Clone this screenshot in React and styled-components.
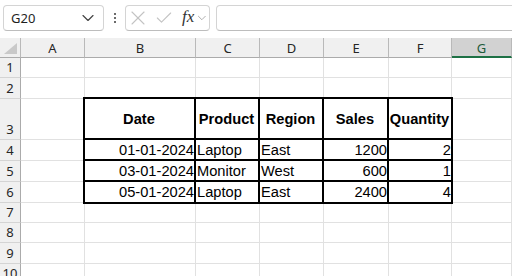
import React from "react";
import styled, { createGlobalStyle } from "styled-components";
import { ChevronDown, X, Check } from "lucide-react";

const GlobalStyle = createGlobalStyle`
  html, body {
    margin: 0;
    padding: 0;
    background: #ffffff;
    overflow: hidden;
  }
  body {
    font-family: 'Noto Sans', 'Liberation Sans', sans-serif;
  }
`;

const COLUMNS = ["A", "B", "C", "D", "E", "F", "G"];
const ROW_HEIGHTS = [20, 21, 41, 21, 21, 21, 20, 20, 21, 20];

const TABLE = [
  [
    { text: "Date", align: "center" },
    { text: "Product", align: "center" },
    { text: "Region", align: "center" },
    { text: "Sales", align: "center" },
    { text: "Quantity", align: "center" },
  ],
  [
    { text: "01-01-2024", align: "right" },
    { text: "Laptop" },
    { text: "East" },
    { text: "1200", align: "right" },
    { text: "2", align: "right" },
  ],
  [
    { text: "03-01-2024", align: "right" },
    { text: "Monitor" },
    { text: "West" },
    { text: "600", align: "right" },
    { text: "1", align: "right" },
  ],
  [
    { text: "05-01-2024", align: "right" },
    { text: "Laptop" },
    { text: "East" },
    { text: "2400", align: "right" },
    { text: "4", align: "right" },
  ],
];

export default function App() {
  return (
    <Page>
      <GlobalStyle />
      <Toolbar>
        <NameBox>
          <NameText>G20</NameText>
          <ChevronDown size={20} strokeWidth={1.4} color="#444" />
        </NameBox>
        <MoreDots>
          <span />
          <span />
          <span />
        </MoreDots>
        <FormulaGroup>
          <CancelIcon size={24} strokeWidth={1.1} color="#c3c3c3" />
          <CheckIcon size={20} strokeWidth={1.3} color="#c3c3c3" />
          <FxLabel>fx</FxLabel>
          <ChevronDown size={16} strokeWidth={1.4} color="#9a9a9a" />
        </FormulaGroup>
        <FormulaInput />
      </Toolbar>

      <Sheet>
        <Corner $r={1} $c={1}>
          <svg width="13" height="11" viewBox="0 0 13 11">
            <polygon points="13,0 13,11 0,11" fill="#c9c9c9" />
          </svg>
        </Corner>
        {COLUMNS.map((col, i) => (
          <ColHeader key={col} $r={1} $c={i + 2} $selected={col === "G"}>
            {col}
          </ColHeader>
        ))}

        {ROW_HEIGHTS.map((_, r) => (
          <React.Fragment key={r}>
            <RowHeader $r={r + 2} $c={1}>
              {r + 1}
            </RowHeader>
            {COLUMNS.map((col, c) => (
              <Cell key={col} $r={r + 2} $c={c + 2} />
            ))}
          </React.Fragment>
        ))}

        <DataTable>
          {TABLE.map((row, r) =>
            row.map((cell, c) => (
              <TableCell key={`${r}-${c}`} $head={r === 0} $align={cell.align}>
                {cell.text}
              </TableCell>
            ))
          )}
        </DataTable>
      </Sheet>
    </Page>
  );
}

const Page = styled.div`
  width: 512px;
  height: 276px;
  display: flex;
  flex-direction: column;
  overflow: hidden;
  background: #ffffff;
`;

const Toolbar = styled.div`
  height: 38px;
  flex: none;
  display: flex;
  align-items: flex-start;
  padding: 5px 0 0 3px;
  box-sizing: border-box;
  background: #ffffff;
`;

const NameBox = styled.div`
  width: 101px;
  height: 26px;
  box-sizing: border-box;
  border: 1px solid #d4d4d4;
  border-bottom-color: #bdbdbd;
  border-radius: 4px;
  display: flex;
  align-items: center;
  justify-content: space-between;
  padding: 0 5px 0 7px;
  background: #ffffff;
`;

const NameText = styled.span`
  font-family: 'Noto Sans', sans-serif;
  font-size: 13px;
  color: #1f1f1f;
`;

const MoreDots = styled.div`
  width: 21px;
  height: 26px;
  display: flex;
  flex-direction: column;
  align-items: center;
  justify-content: center;
  gap: 2px;

  span {
    width: 2px;
    height: 2px;
    background: #3a3a3a;
    border-radius: 1px;
  }
`;

const FormulaGroup = styled.div`
  width: 85px;
  height: 26px;
  box-sizing: border-box;
  border: 1px solid #d4d4d4;
  border-bottom-color: #bdbdbd;
  border-radius: 4px;
  display: flex;
  align-items: center;
  padding: 0;
  background: #ffffff;
  flex: none;
`;

const CancelIcon = styled(X)`
  margin-right: 4px;
  flex: none;
`;

const CheckIcon = styled(Check)`
  margin-right: 8px;
  flex: none;
`;

const FxLabel = styled.span`
  font-family: 'Liberation Serif', 'DejaVu Serif', serif;
  font-style: italic;
  font-size: 17px;
  color: #333333;
  margin-right: 1px;
  margin-top: -2px;
`;

const FormulaInput = styled.div`
  flex: 1;
  height: 26px;
  margin-left: 6px;
  margin-right: -6px;
  box-sizing: border-box;
  border: 1px solid #d4d4d4;
  border-bottom-color: #bdbdbd;
  border-radius: 4px;
  background: #ffffff;
`;

const Sheet = styled.div`
  flex: 1;
  display: grid;
  grid-template-columns: 21px 64px 111px 64px 64px 65px 63px 1fr;
  grid-template-rows: 20px ${ROW_HEIGHTS.map((h) => `${h}px`).join(" ")};
  align-content: start;
  overflow: hidden;
`;

const placed = `
  box-sizing: border-box;
  grid-row: var(--r);
  grid-column: var(--c);
`;

const Corner = styled.div.attrs((p) => ({
  style: { "--r": p.$r, "--c": p.$c },
}))`
  ${placed}
  background: #f0f0f0;
  border-right: 1px solid #b9b9b9;
  border-bottom: 1px solid #ababab;
  display: flex;
  align-items: flex-end;
  justify-content: flex-end;
  padding: 0 3px 3px 0;
`;

const ColHeader = styled.div.attrs((p) => ({
  style: { "--r": p.$r, "--c": p.$c },
}))`
  ${placed}
  background: ${(p) => (p.$selected ? "#d2d2d2" : "#f0f0f0")};
  border-right: 1px solid #b9b9b9;
  border-bottom: ${(p) => (p.$selected ? "2px solid #1e7145" : "1px solid #ababab")};
  display: flex;
  align-items: center;
  justify-content: center;
  font-family: 'Noto Sans', sans-serif;
  font-size: 13px;
  color: ${(p) => (p.$selected ? "#1d5b3a" : "#262626")};
  padding-top: 1px;
`;

const RowHeader = styled.div.attrs((p) => ({
  style: { "--r": p.$r, "--c": p.$c },
}))`
  ${placed}
  background: #f0f0f0;
  border-right: 1px solid #ababab;
  border-bottom: 1px solid #d4d4d4;
  display: flex;
  align-items: flex-end;
  justify-content: center;
  font-family: 'Noto Sans', sans-serif;
  font-size: 13px;
  line-height: 18px;
  color: #262626;
  padding-bottom: 1px;
`;

const Cell = styled.div.attrs((p) => ({
  style: { "--r": p.$r, "--c": p.$c },
}))`
  ${placed}
  background: #ffffff;
  border-right: 1px solid #e1e1e1;
  border-bottom: 1px solid #e1e1e1;
`;

const DataTable = styled.div`
  grid-column: 3 / 8;
  grid-row: 4 / 8;
  margin: -2px -1px -1px -2px;
  display: grid;
  grid-template-columns: 111px 64px 64px 65px 64px;
  grid-template-rows: 41px 21px 21px 22px;
  border-top: 2px solid #000000;
  border-left: 2px solid #000000;
  background: #ffffff;
  z-index: 1;
`;

const TableCell = styled.div`
  box-sizing: border-box;
  border-right: 2px solid #000000;
  border-bottom: 2px solid #000000;
  display: flex;
  align-items: center;
  justify-content: ${(p) =>
    p.$align === "right" ? "flex-end" : p.$align === "center" ? "center" : "flex-start"};
  padding: ${(p) => (p.$align === "right" ? "0 0 0 2px" : "0 2px 0 1px")};
  font-family: 'Liberation Sans', Arial, sans-serif;
  font-size: 14.67px;
  font-weight: ${(p) => (p.$head ? 700 : 400)};
  color: #000000;
  white-space: nowrap;
  overflow: hidden;
`;
